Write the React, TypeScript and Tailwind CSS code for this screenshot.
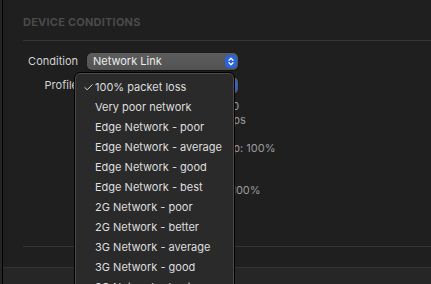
import { Check } from 'lucide-react';

const profiles = [
  '100% packet loss',
  'Very poor network',
  'Edge Network - poor',
  'Edge Network - average',
  'Edge Network - good',
  'Edge Network - best',
  '2G Network - poor',
  '2G Network - better',
  '3G Network - average',
  '3G Network - good',
  '3G Network - best',
  'LTE Network',
];

const details = [
  'Downlink Bandwidth: 0',
  'Downlink BW Unit: Kbps',
  'Downlink Delay: 0 ms',
  'Downlink Packets Drop: 100%',
  'Uplink Bandwidth: 0',
  'Uplink Delay: 0 ms',
  'Uplink Packets Drop: 100%',
];

function Stepper() {
  return (
    <span className="flex h-[13px] w-[12px] items-center justify-center rounded-[4px] bg-[#2a63db]">
      <svg width="6" height="9" viewBox="0 0 6 9" fill="none" stroke="white" strokeWidth="1.3" strokeLinecap="round" strokeLinejoin="round">
        <path d="M1 3.2 L3 1.2 L5 3.2" />
        <path d="M1 5.8 L3 7.8 L5 5.8" />
      </svg>
    </span>
  );
}

function PopUp({ label }: { label: string }) {
  return (
    <div className="flex h-[17px] w-[151px] items-center justify-between rounded-[5px] bg-gradient-to-b from-[#5d5d5d] to-[#525252] pl-[6px] pr-[1px] shadow-[0_0.5px_1px_rgba(0,0,0,0.5)]">
      <span className="text-[11px] leading-none text-[#ececec]">{label}</span>
      <Stepper />
    </div>
  );
}

export default function App() {
  return (
    <div
      className="relative flex h-[284px] w-[431px] overflow-hidden bg-[#1f1f1f]"
      style={{ fontFamily: 'Inter, "Noto Sans", sans-serif' }}
    >
      <div className="w-[2px] bg-[#252525]" />
      <div className="w-px bg-black" />

      <div className="flex flex-1 flex-col">
        <div className="pl-[20px] pt-[16px] h-[40px]">
          <h2 className="text-[11px] font-bold leading-[13px] tracking-[0.02em] text-[#4a4a4a]">
            DEVICE CONDITIONS
          </h2>
        </div>
        <div className="ml-[20px] h-px bg-[#363636]" />

        <div className="mt-[12px] flex flex-col gap-[7px]">
          <div className="flex items-center">
            <span className="w-[75px] text-right text-[11px] leading-none text-[#d2d2d2]">Condition</span>
            <div className="ml-[9px]">
              <PopUp label="Network Link" />
            </div>
          </div>
          <div className="flex items-center">
            <span className="w-[75px] text-right text-[11px] leading-none text-[#d2d2d2]">Profile</span>
            <div className="ml-[9px]">
              <PopUp label="100% packet loss" />
            </div>
          </div>
        </div>

        <div className="mt-[5px] flex flex-col pl-[117px]">
          {details.map((d) => (
            <p key={d} className="whitespace-nowrap text-[11px] leading-[14px] text-[#9c9c9c]">
              {d}
            </p>
          ))}
        </div>

        <div className="mt-auto ml-[20px] h-px bg-[#363636]" />
        <div className="h-[20px]" />
        <div className="h-px bg-[#333333]" />
        <div className="h-[16px] bg-[#262626]" />
      </div>

      <div className="absolute left-[74px] top-[72px] w-[161px] h-[240px] rounded-[6px] border border-black bg-[#2a2a2b] pt-[4px] shadow-[inset_0_0_0_1px_#4a4a4a]">
        {profiles.map((p, i) => (
          <div key={p} className="flex h-[20px] items-center">
            <span className="flex w-[20px] justify-end pr-[1px]">
              {i === 0 && <Check size={11} strokeWidth={2} className="text-[#e6e6e6]" />}
            </span>
            <span className="whitespace-nowrap text-[11px] leading-none text-[#dedede]">{p}</span>
          </div>
        ))}
      </div>
    </div>
  );
}
